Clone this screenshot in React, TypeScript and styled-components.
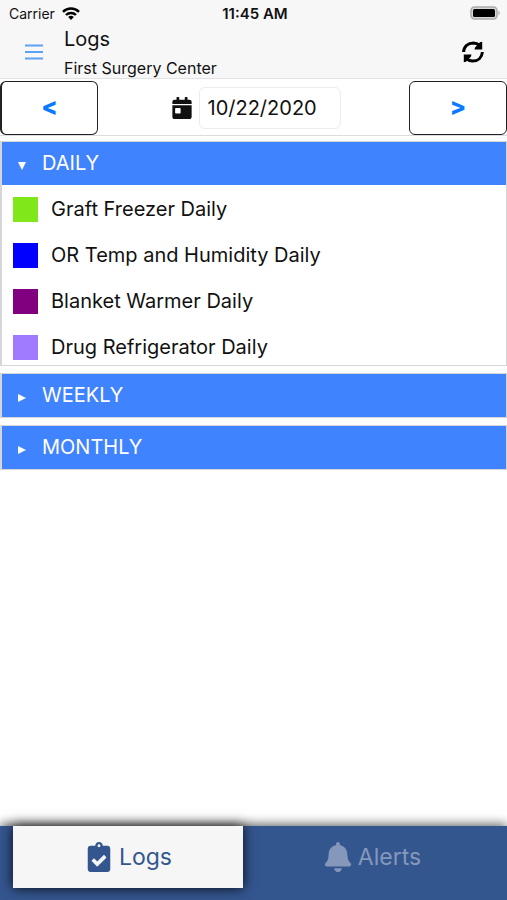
import React, { useState } from "react";
import styled, { createGlobalStyle } from "styled-components";
import { FaBell, FaCalendarDay, FaClipboardCheck } from "react-icons/fa";

const GlobalStyle = createGlobalStyle`
  *, *::before, *::after { box-sizing: border-box; }
  body { margin: 0; background: #fff; color: #111; font-family: Inter, "Liberation Sans", sans-serif; }
  button, input { font: inherit; color: inherit; margin: 0; }
  h1, p, ul { margin: 0; padding: 0; font-weight: 400; }
`;

const Screen = styled.div`
  display: flex;
  flex-direction: column;
  min-height: 100vh;
`;

const TopArea = styled.header`
  background: #f7f7f7;
  border-bottom: 1px solid #e2e2e2;
`;

const StatusBar = styled.div`
  display: grid;
  grid-template-columns: 1fr auto 1fr;
  align-items: center;
  height: 26px;
  padding: 0 6px 0 9px;
  font-size: 14px;
`;

const Carrier = styled.span`
  display: flex;
  align-items: center;
  gap: 7px;
`;

const Clock = styled.span`
  font-size: 15px;
  font-weight: 600;
`;

const BatteryIcon = styled.svg`
  justify-self: end;
  display: block;
`;

const TitleBar = styled.div`
  display: flex;
  align-items: center;
  height: 52px;
  padding: 0 20px;
`;

const IconButton = styled.button`
  display: grid;
  place-items: center;
  width: 28px;
  height: 28px;
  padding: 0;
  border: 0;
  background: none;
`;

const Titles = styled.div`
  flex: 1;
  padding: 3px 0 0 16px;
`;

const Title = styled.h1`
  font-size: 20px;
  line-height: 28px;
`;

const Subtitle = styled.p`
  font-size: 16px;
  line-height: 30px;
`;

const DateBar = styled.div`
  display: flex;
  justify-content: space-between;
  align-items: center;
  padding: 2px 0 0;
  border-bottom: 1px solid #dcdce0;
`;

const StepButton = styled.button`
  width: 98px;
  height: 54px;
  padding: 0 0 4px;
  border: 1px solid #222;
  border-radius: 6px;
  background: #fff;
  color: #0a7aff;
  font-size: 24px;
  font-weight: 800;
`;

const PrevButton = styled(StepButton)`
  border-left-width: 2px;
`;

const DateField = styled.label`
  display: flex;
  align-items: center;
  gap: 6px;
  padding-left: 4px;
`;

const DateInput = styled.input`
  width: 142px;
  height: 42px;
  padding: 0 8px;
  border: 1px solid #ececec;
  border-radius: 6px;
  background: #fff;
  font-size: 20px;
`;

const Sections = styled.main`
  flex: 1;
  display: flex;
  flex-direction: column;
  gap: 7px;
  padding-top: 5px;
`;

const Section = styled.section`
  border: 1px solid #d6d6da;
  border-left-width: 2px;
`;

const SectionHeader = styled.button`
  display: flex;
  align-items: center;
  gap: 14px;
  width: 100%;
  height: 43px;
  padding: 0 14px 2px;
  border: 0;
  background: #4083ff;
  color: #fff;
  font-size: 20px;
  text-align: left;
`;

const Marker = styled.svg`
  display: block;
  margin-top: 6px;
`;

const LogList = styled.ul`
  display: flex;
  flex-direction: column;
  gap: 18px;
  padding: 10px 11px 4px;
  list-style: none;
`;

const LogItem = styled.li`
  display: flex;
  align-items: center;
  gap: 13px;
  height: 28px;
  font-size: 20px;
`;

const Swatch = styled.span<{ $color: string }>`
  width: 25px;
  height: 25px;
  background: ${({ $color }) => $color};
`;

const TabBar = styled.nav`
  display: grid;
  grid-template-columns: 1fr 1fr;
  gap: 14px;
  padding: 0 20px 12px 13px;
  background: #34568f;
  box-shadow: 0 -2px 10px rgba(0, 0, 0, 0.6);
`;

const Tab = styled.button<{ $active: boolean }>`
  display: flex;
  justify-content: center;
  align-items: center;
  gap: 5px;
  height: 62px;
  padding: 0;
  border: 0;
  background: ${({ $active }) => ($active ? "#f6f6f6" : "transparent")};
  color: ${({ $active }) => ($active ? "#34568f" : "#8598bc")};
  box-shadow: ${({ $active }) => ($active ? "0 0 12px rgba(0, 0, 0, 0.9)" : "none")};
  font-size: 23px;
`;

const sections = [
  {
    name: "DAILY",
    logs: [
      { name: "Graft Freezer Daily", color: "#80e81a" },
      { name: "OR Temp and Humidity Daily", color: "#0000ff" },
      { name: "Blanket Warmer Daily", color: "#800080" },
      { name: "Drug Refrigerator Daily", color: "#a07aff" },
    ],
  },
  { name: "WEEKLY", logs: [] },
  { name: "MONTHLY", logs: [] },
];

export default function App() {
  const [open, setOpen] = useState<string | null>("DAILY");
  const [tab, setTab] = useState("Logs");
  const [date, setDate] = useState(new Date(2020, 9, 22));
  const step = (days: number) =>
    setDate(new Date(date.getFullYear(), date.getMonth(), date.getDate() + days));
  const dateText = [date.getMonth() + 1, date.getDate(), date.getFullYear()]
    .map((part) => String(part).padStart(2, "0"))
    .join("/");

  return (
    <Screen>
      <GlobalStyle />
      <TopArea>
        <StatusBar>
          <Carrier>
            Carrier
            <svg width="18" height="13" viewBox="0 0 18 13" aria-hidden>
              <g fill="none" stroke="#000" strokeWidth="2.5">
                <path d="M1 4.9A11.3 11.3 0 0 1 17 4.9" />
                <path d="M4 8A7 7 0 0 1 14 8" />
              </g>
              <path d="M9 13L6.2 10.1A4 4 0 0 1 11.8 10.1Z" />
            </svg>
          </Carrier>
          <Clock>11:45 AM</Clock>
          <BatteryIcon width="31" height="14" viewBox="0 0 31 14" aria-label="Battery full">
            <rect x="1" y="1" width="26" height="12" rx="3.5" fill="#d8d8d8" stroke="#aaa" strokeWidth="1.5" />
            <rect x="3" y="3" width="22" height="8" rx="1.5" fill="#000" />
            <path d="M28.5 4.5Q31 7 28.5 9.5Z" fill="#aaa" />
          </BatteryIcon>
        </StatusBar>
        <TitleBar>
          <IconButton aria-label="Menu">
            <svg width="18" height="16" viewBox="0 0 18 16" stroke="#5aa2f5" strokeWidth="1.8">
              <path d="M0 1.5H18M0 8H18M0 14.5H18" />
            </svg>
          </IconButton>
          <Titles>
            <Title>Logs</Title>
            <Subtitle>First Surgery Center</Subtitle>
          </Titles>
          <IconButton aria-label="Refresh">
            <svg width="22" height="22" viewBox="0 0 22 22">
              <g fill="none" stroke="#000" strokeWidth="3">
                <path d="M1.6 11C2 5.5 6 2 11.5 1.9C14 2 15.8 2.8 17.5 4.4" />
                <path d="M20.4 11C20 16.5 16 20 10.5 20.1C8 20 6.2 19.2 4.5 17.6" />
              </g>
              <path d="M20.2 0.8V8.6H12.6L13 6.4L18 1.2Z M1.8 21.2V13.4H9.4L9 15.6L4 20.8Z" />
            </svg>
          </IconButton>
        </TitleBar>
      </TopArea>
      <DateBar>
        <PrevButton aria-label="Previous day" onClick={() => step(-1)}>&lt;</PrevButton>
        <DateField>
          <FaCalendarDay size={22} aria-hidden />
          <DateInput aria-label="Date" value={dateText} readOnly />
        </DateField>
        <StepButton aria-label="Next day" onClick={() => step(1)}>&gt;</StepButton>
      </DateBar>
      <Sections>
        {sections.map(({ name, logs }) => {
          const isOpen = open === name;
          return (
            <Section key={name}>
              <SectionHeader aria-expanded={isOpen} onClick={() => setOpen(isOpen ? null : name)}>
                <Marker width="12" height="8" viewBox="0 0 12 8" fill="#fff" aria-hidden>
                  <path d={isOpen ? "M2 0H10L6 8Z" : "M2 0L10 4L2 8Z"} />
                </Marker>
                {name}
              </SectionHeader>
              {isOpen && logs.length > 0 && (
                <LogList>
                  {logs.map((log) => (
                    <LogItem key={log.name}>
                      <Swatch $color={log.color} />
                      {log.name}
                    </LogItem>
                  ))}
                </LogList>
              )}
            </Section>
          );
        })}
      </Sections>
      <TabBar>
        <Tab $active={tab === "Logs"} onClick={() => setTab("Logs")}>
          <FaClipboardCheck size={30} aria-hidden /> Logs
        </Tab>
        <Tab $active={tab === "Alerts"} onClick={() => setTab("Alerts")}>
          <FaBell size={30} aria-hidden /> Alerts
        </Tab>
      </TabBar>
    </Screen>
  );
}
